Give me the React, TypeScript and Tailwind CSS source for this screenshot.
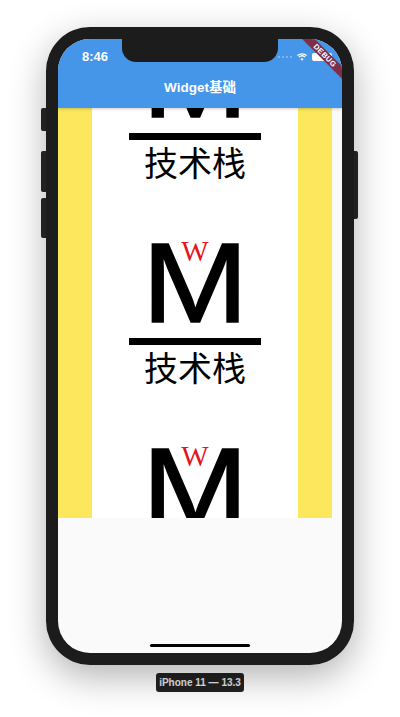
import React from "react";

function Logo() {
  return (
    <div className="h-[205px] flex flex-col items-center shrink-0">
      {/* M with the small red W on top */}
      <div className="relative pt-[11px]">
        <span className="block text-[113px] leading-[100px] text-black font-['Liberation_Sans',sans-serif] scale-x-[1.13] [-webkit-text-stroke:1.5px_#000]">M</span>
        <span className="absolute top-[15px] left-1/2 -translate-x-1/2 text-[29px] leading-none text-[#e3151c] font-['Liberation_Serif',serif]">W</span>
      </div>
      <div className="mt-[5px] w-[132px] h-[7px] bg-black" />
      <div className="mt-[5px] text-[34px] leading-none text-black font-['Noto_Sans_CJK_SC',sans-serif]">技术栈</div>
    </div>
  );
}

function StatusBar() {
  return (
    <div className="h-[30px] flex items-center justify-between pl-[24px] pr-[10px]">
      <span className="mt-[5px] text-[13px] font-semibold text-white font-['Liberation_Sans',sans-serif]">8:46</span>
      <div className="mt-[5px] flex items-center gap-[5px]">
        <div className="flex gap-[2px]">
          {[0, 1, 2, 3].map((i) => (
            <div key={i} className="w-[2px] h-[2px] rounded-full bg-white/40" />
          ))}
        </div>
        <svg width="10" height="8" viewBox="0 0 20 15" fill="white">
          <path d="M10 15l3-3.5a4.5 4.5 0 0 0-6 0z" />
          <path d="M10 6.5a8.5 8.5 0 0 1 5.7 2.2l1.6-1.9a11 11 0 0 0-14.6 0l1.6 1.9A8.5 8.5 0 0 1 10 6.5z" />
          <path d="M10 2.5a12.5 12.5 0 0 1 8.3 3.1l1.7-1.9A15 15 0 0 0 0 3.7l1.7 1.9A12.5 12.5 0 0 1 10 2.5z" />
        </svg>
        <div className="w-[20px] h-[8px] rounded-[2px] bg-white" />
      </div>
    </div>
  );
}

export default function App() {
  return (
    <div className="w-[400px] h-[717px] bg-white flex flex-col items-center font-['Liberation_Sans',sans-serif]">
      {/* phone */}
      <div className="relative mt-[27px] w-[308px] h-[638px] rounded-[44px] bg-[#1c1c1d] p-[12px] shadow-[0_12px_36px_rgba(0,0,0,0.3)]">
        {/* side buttons */}
        <div className="absolute left-[-5px] top-[81px] w-[5px] h-[23px] rounded-l-[2px] bg-[#222]" />
        <div className="absolute left-[-5px] top-[124px] w-[5px] h-[41px] rounded-l-[2px] bg-[#222]" />
        <div className="absolute left-[-5px] top-[171px] w-[5px] h-[40px] rounded-l-[2px] bg-[#222]" />
        <div className="absolute right-[-4px] top-[124px] w-[4px] h-[68px] rounded-r-[2px] bg-[#222]" />

        {/* screen */}
        <div className="relative w-[284px] h-[614px] rounded-[32px] overflow-hidden bg-[#fafafa] flex flex-col">
          <div className="h-[69px] bg-[#4595e8] flex flex-col shrink-0 shadow-[0_1px_3px_rgba(0,0,0,0.2)] z-10">
            <StatusBar />
            <div className="flex-1 flex items-center justify-center">
              <span className="text-[13.5px] font-semibold text-white font-['Liberation_Sans','Noto_Sans_CJK_SC',sans-serif]">Widget基础</span>
            </div>
          </div>

          <div className="flex">
            <div className="w-[274px] h-[410px] px-[34px] bg-[#fce75d]">
              <div className="h-full bg-white overflow-hidden">
                <div className="mt-[-91px] flex flex-col">
                  <Logo />
                  <Logo />
                  <Logo />
                </div>
              </div>
            </div>
          </div>

          <div className="flex-1" />
          <div className="mb-[6px] mx-auto w-[100px] h-[3px] rounded-full bg-black" />

          {/* notch */}
          <div className="absolute top-0 left-[64px] w-[156px] h-[23px] rounded-b-[14px] bg-[#1c1c1d] z-20" />

          {/* debug banner */}
          <div className="absolute top-[12px] left-[236px] w-[62px] h-[9px] rotate-45 bg-[#7d2f47] flex items-center justify-center z-20">
            <span className="text-[7.5px] font-bold text-white leading-none tracking-[0.4px]">DEBUG</span>
          </div>
        </div>
      </div>

      <div className="mt-[8px] w-[88px] h-[19px] rounded-[3px] bg-[#222] flex items-center justify-center">
        <span className="text-[10px] font-semibold text-white/90">iPhone 11 — 13.3</span>
      </div>
    </div>
  );
}
